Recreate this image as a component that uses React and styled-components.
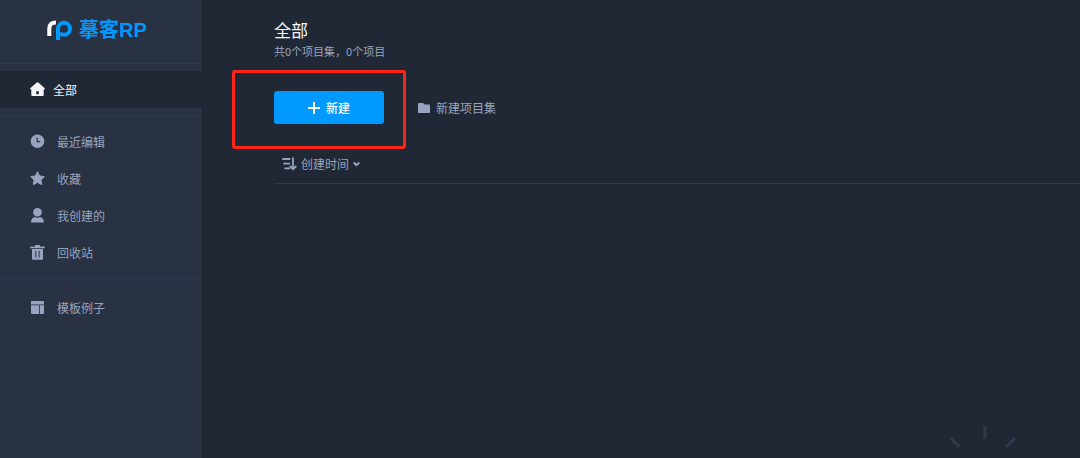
import React from 'react';
import styled, { createGlobalStyle, ThemeProvider } from 'styled-components';

const theme = {
  background: '#212835',
  sidebar: '#293242',
  line: '#2f3b4d',
  edge: '#1d2430',
  text: '#98a4bf',
  white: '#f4f6fa',
  primary: '#0099ff',
  highlight: '#fb2617',
};

const GlobalStyle = createGlobalStyle`
  * {
    box-sizing: border-box;
  }

  body {
    margin: 0;
    background: ${theme.background};
    color: ${theme.text};
    font-family: "Noto Sans CJK SC", sans-serif;
    font-size: 12px;
    line-height: 18px;
  }
`;

const Layout = styled.div`
  display: flex;
  min-height: 100vh;
`;

const Sidebar = styled.aside`
  flex: 0 0 203px;
  background: ${({ theme }) => theme.sidebar};
  border-right: 1px solid ${({ theme }) => theme.edge};
`;

const Brand = styled.div`
  display: flex;
  align-items: center;
  gap: 7px;
  height: 64px;
  padding: 0 0 4px 47px;
  border-bottom: 1px solid ${({ theme }) => theme.line};
  color: ${({ theme }) => theme.primary};
  font-family: "Liberation Sans", "Noto Sans CJK SC", sans-serif;
  font-size: 20px;
  font-weight: 700;
  line-height: 28px;
`;

const NavGroup = styled.ul`
  list-style: none;
  margin: 0;
  padding: ${({ $space }) => $space || 7}px 0;

  & + & {
    border-top: 1px solid ${({ theme }) => theme.line};
  }
`;

const NavLink = styled.a`
  display: flex;
  align-items: center;
  gap: ${({ $active }) => ($active ? 8 : 12)}px;
  height: 37px;
  padding-left: 30px;
  background: ${({ $active, theme }) => ($active ? theme.background : 'transparent')};
  color: ${({ $active, theme }) => ($active ? theme.white : theme.text)};
  text-decoration: none;
`;

const Main = styled.main`
  position: relative;
  flex: 1;
  min-width: 0;
  padding: 18px 0 0 71px;
  overflow: hidden;
`;

const Title = styled.h1`
  margin: 0;
  color: ${({ theme }) => theme.white};
  font-size: 17px;
  font-weight: 400;
  line-height: 24px;
`;

const Summary = styled.p`
  margin: 0;
  font-size: 11px;
`;

const Actions = styled.div`
  display: flex;
  align-items: center;
  gap: 34px;
  margin-top: 31px;
`;

const Highlighted = styled.div`
  position: relative;
  display: flex;

  &::after {
    content: '';
    position: absolute;
    inset: -21px -22px -25px -42px;
    border: 3px solid ${({ theme }) => theme.highlight};
    border-radius: 3px;
    pointer-events: none;
  }
`;

const Button = styled.button`
  display: flex;
  align-items: center;
  gap: ${({ $gap }) => $gap || 6}px;
  padding: 0;
  border: 0;
  background: none;
  color: inherit;
  font: inherit;
  cursor: pointer;
`;

const PrimaryButton = styled(Button)`
  justify-content: center;
  width: 110px;
  height: 33px;
  border-radius: 3px;
  background: ${({ theme }) => theme.primary};
  color: #fff;
  font-weight: 500;
`;

const SortBar = styled.div`
  display: flex;
  margin-top: 20px;
  padding: 11px 8px 10px;
  border-bottom: 1px solid ${({ theme }) => theme.line};
`;

const Loader = styled.svg`
  position: absolute;
  right: 63px;
  bottom: 8px;
`;

const HomeIcon = () => (
  <svg width="15" height="15" viewBox="0 0 15 15" fill="currentColor" aria-hidden="true">
    <path fillRule="evenodd" d="M6.5.8a1.500 1.500 0 0 1 2 0l6 5.300c.6.5.3 1.300-.4 1.300h-.4V13a1 1 0 0 1-1 1H2.300a1 1 0 0 1-1-1V7.400H.9c-.7 0-1-.8-.4-1.300zM6.200 9.300v3h2.600v-3z" />
  </svg>
);

const ClockIcon = () => (
  <svg width="15" height="15" viewBox="0 0 15 15" aria-hidden="true">
    <circle cx="7.5" cy="7.2" r="6.8" fill="currentColor" />
    <path d="M7.200 3.500v4.200h3" fill="none" stroke={theme.sidebar} strokeWidth="1.2" />
  </svg>
);

const StarIcon = () => (
  <svg width="15" height="15" viewBox="0 0 15 15" fill="currentColor" stroke="currentColor" strokeLinejoin="round" aria-hidden="true">
    <path d="M7.5.7l2.100 4.200 4.700.7-3.400 3.300.8 4.700-4.200-2.200-4.200 2.200.8-4.700L.7 5.600l4.700-.7z" />
  </svg>
);

const UserIcon = () => (
  <svg width="15" height="15" viewBox="0 0 15 15" fill="currentColor" aria-hidden="true">
    <circle cx="7.5" cy="4.300" r="4.300" />
    <path d="M1 14.500c0-3.300 1.900-5 4-5.400 1.500.8 3.500.8 5 0 2.100.4 4 2.100 4 5.400z" />
  </svg>
);

const TrashIcon = () => (
  <svg width="15" height="15" viewBox="0 0 15 15" fill="currentColor" aria-hidden="true">
    <path d="M.3 1.500h4.400L5.300 0h4.400l.6 1.500h4.400v1.800H.3z" />
    <path fillRule="evenodd" d="M2 4h11v9.500a1.200 1.200 0 0 1-1.200 1.200H3.200A1.200 1.200 0 0 1 2 13.500zM5.300 6v6.500h1V6zM8.600 6v6.500h1V6z" />
  </svg>
);

const TemplateIcon = () => (
  <svg width="15" height="15" viewBox="0 0 15 15" fill="currentColor" aria-hidden="true">
    <path d="M2 1h11a1 1 0 0 1 1 1v2.500H1V2a1 1 0 0 1 1-1zM1 5.300h8V14H2a1 1 0 0 1-1-1zM9.800 5.300H14V13a1 1 0 0 1-1 1H9.800z" />
  </svg>
);

const Logo = () => (
  <svg width="25" height="20" viewBox="0 0 25 20" fill="none" strokeWidth="4" aria-hidden="true">
    <path d="M2.300 16V8.500C2.300 4.600 4.500 2.600 9 2.600" stroke="#fff" />
    <path d="M11 20V8.800a6 6 0 1 1 6 6c-1.800 0-3.200-.6-4.300-1.700" stroke={theme.primary} />
  </svg>
);

const PlusIcon = () => (
  <svg width="12" height="12" viewBox="0 0 12 12" stroke="currentColor" strokeWidth="2" aria-hidden="true">
    <path d="M6 0v12M0 6h12" />
  </svg>
);

const FolderIcon = () => (
  <svg width="12" height="10" viewBox="0 0 12 10" fill="currentColor" aria-hidden="true">
    <path d="M.8 0H5.200l1.300 1.600h4.700a.8.8 0 0 1 .8.8v6.800a.8.8 0 0 1-.8.8H.8a.8.8 0 0 1-.8-.8V.8A.8.8 0 0 1 .8 0z" />
  </svg>
);

const SortIcon = () => (
  <svg width="15" height="14" viewBox="0 0 15 14" fill="none" stroke="currentColor" strokeWidth="1.8" aria-hidden="true">
    <path d="M.3 2h8M1.300 6.700H8M2.300 11.400H8M11 .5v12M7.800 9l3.200 3.300L14.300 9" />
  </svg>
);

const ChevronIcon = () => (
  <svg width="7" height="6" viewBox="0 0 7 6" fill="none" stroke="currentColor" strokeWidth="2" aria-hidden="true">
    <path d="M.7 1.500l2.800 2.700 2.800-2.700" />
  </svg>
);

const groups = [
  { items: [{ label: '全部', Icon: HomeIcon, active: true }] },
  {
    items: [
      { label: '最近编辑', Icon: ClockIcon },
      { label: '收藏', Icon: StarIcon },
      { label: '我创建的', Icon: UserIcon },
      { label: '回收站', Icon: TrashIcon },
    ],
  },
  { space: 10, items: [{ label: '模板例子', Icon: TemplateIcon }] },
];

const App = () => {
  return (
    <ThemeProvider theme={theme}>
      <GlobalStyle />
      <Layout>
        <Sidebar>
          <Brand>
            <Logo />
            <span>摹客RP</span>
          </Brand>
          <nav>
            {groups.map((group, index) => (
              <NavGroup key={index} $space={group.space}>
                {group.items.map(({ label, Icon, active }) => (
                  <li key={label}>
                    <NavLink href="#" $active={active}>
                      <Icon />
                      <span>{label}</span>
                    </NavLink>
                  </li>
                ))}
              </NavGroup>
            ))}
          </nav>
        </Sidebar>
        <Main>
          <Title>全部</Title>
          <Summary>共0个项目集，0个项目</Summary>
          <Actions>
            <Highlighted>
              <PrimaryButton type="button">
                <PlusIcon />
                <span>新建</span>
              </PrimaryButton>
            </Highlighted>
            <Button type="button">
              <FolderIcon />
              <span>新建项目集</span>
            </Button>
          </Actions>
          <SortBar>
            <Button type="button" $gap={4}>
              <SortIcon />
              <span>创建时间</span>
              <ChevronIcon />
            </Button>
          </SortBar>
          <Loader width="68" height="24" viewBox="0 0 68 24" stroke={theme.line} strokeWidth="3" aria-hidden="true">
            <path d="M36 0v13M1.500 12l9 9M66 12l-9 9" />
          </Loader>
        </Main>
      </Layout>
    </ThemeProvider>
  );
};

export default App;
